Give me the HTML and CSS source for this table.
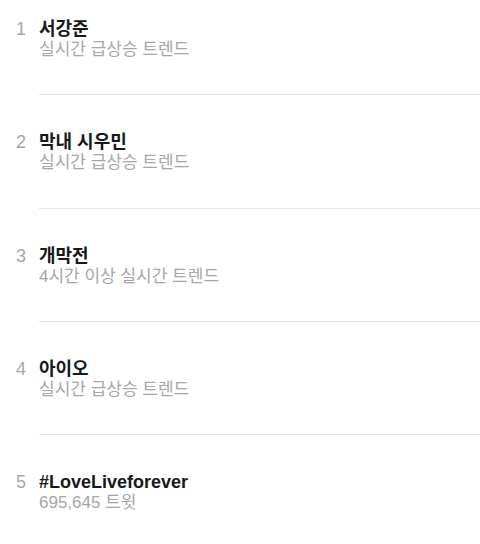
FILE: index.html
```html
<!DOCTYPE html>
<html lang="ko">
<head>
<meta charset="utf-8">
<link rel="stylesheet" href="styles.css">
</head>
<body>
<ul class="trends">
  <li class="trend"><span class="rank">1</span><div class="body"><div class="title">서강준</div><div class="meta">실시간 급상승 트렌드</div></div></li>
  <li class="trend"><span class="rank">2</span><div class="body"><div class="title">막내 시우민</div><div class="meta">실시간 급상승 트렌드</div></div></li>
  <li class="trend"><span class="rank">3</span><div class="body"><div class="title">개막전</div><div class="meta">4시간 이상 실시간 트렌드</div></div></li>
  <li class="trend"><span class="rank">4</span><div class="body"><div class="title">아이오</div><div class="meta">실시간 급상승 트렌드</div></div></li>
  <li class="trend"><span class="rank">5</span><div class="body"><div class="title">#LoveLiveforever</div><div class="meta">695,645 트윗</div></div></li>
</ul>
</body>
</html>
```
FILE: styles.css
```css
html, body {
  margin: 0;
  padding: 0;
  background: #ffffff;
  overflow: hidden;
}
body {
  font-family: "Liberation Sans", "Noto Sans CJK KR", sans-serif;
  width: 480px;
  height: 544px;
}
.trends {
  list-style: none;
  margin: -18px 0 0 0;
  padding: 0;
}
.trend {
  display: flex;
}
.rank {
  width: 39px;
  box-sizing: border-box;
  padding: 37px 0 0 16px;
  font-size: 18px;
  line-height: 20px;
  color: #a3a7ab;
}
.body {
  flex: 1;
  padding: 37px 0 34.33px 0;
  border-bottom: 1px solid #e3e4e6;
}
.title {
  font-size: 18px;
  font-weight: bold;
  line-height: 20px;
  color: #17191b;
}
.meta {
  font-size: 17px;
  line-height: 21px;
  color: #a3a7ab;
}
```
